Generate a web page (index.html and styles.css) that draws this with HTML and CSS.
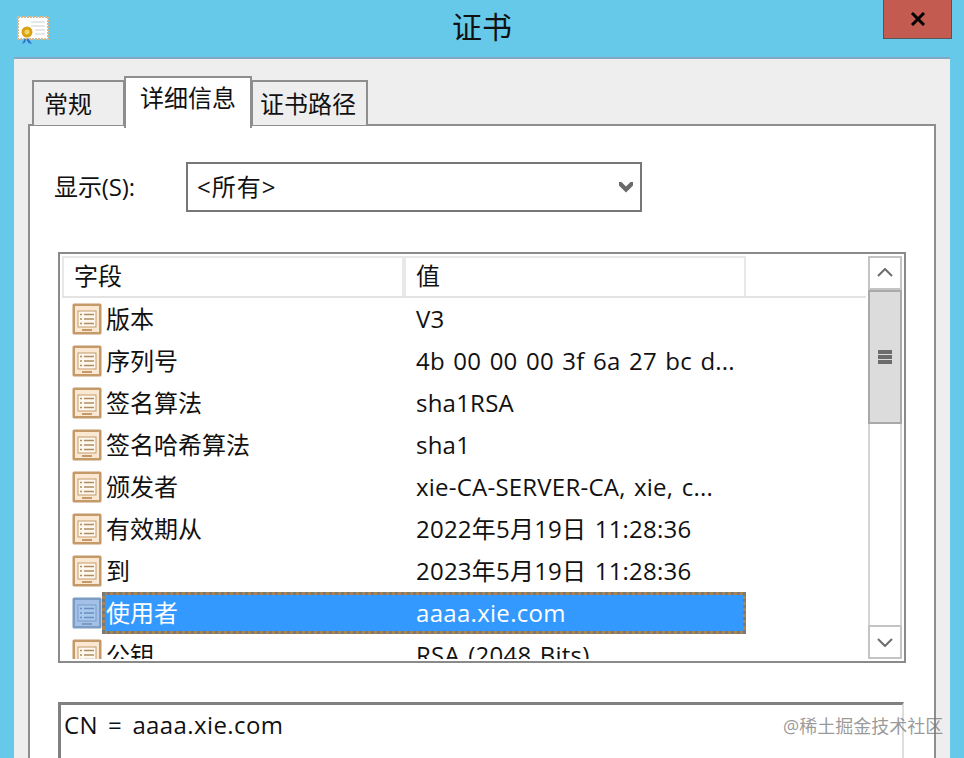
FILE: index.html
```html
<!DOCTYPE html>
<html lang="zh">
<head>
<meta charset="utf-8">
<title>证书</title>
<link rel="stylesheet" href="styles.css">
</head>
<body>
<svg class="defs" width="0" height="0" aria-hidden="true">
  <symbol id="field" viewBox="0 0 30 32">
    <rect x="0.500" y="0.500" width="29" height="31" rx="1.500" class="ic-edge"/>
    <rect x="3" y="3" width="24" height="26" class="ic-fill"/>
    <rect x="6" y="8" width="18" height="16" class="ic-paper"/>
    <path d="M8 11.500h2M12 11.500h10M8 16h2M12 16h10M8 20.500h2M12 20.500h10" class="ic-line"/>
    <path d="M10 27h10" class="ic-foot"/>
  </symbol>
</svg>
<header class="titlebar">
  <svg class="cert" width="32" height="28" viewBox="0 0 32 28">
    <rect x="1" y="1" width="30" height="22" fill="#fff" stroke="#d9b98c" stroke-width="2" stroke-dasharray="2 1"/>
    <path d="M14 6h14M14 10h14M18 14h10M18 18h10" stroke="#cfcfcf" stroke-width="1.200"/>
    <path d="M8 22l-3 6 3-1.500 1-3zM11 22l4 6-3.500-1-2-3z" fill="#2f6fd0"/>
    <circle cx="10" cy="16" r="5.500" fill="#d9a30f"/>
    <circle cx="10" cy="16" r="2.500" fill="#f3d46a"/>
  </svg>
  <h1 class="title">证书</h1>
  <div class="close"><svg width="16" height="14" viewBox="0 0 16 14"><path d="M2 1l12 12M14 1L2 13" stroke="#000" stroke-width="3"/></svg></div>
</header>
<main class="window">
  <nav class="tabs">
    <div class="tab">常规</div>
    <div class="tab tab-on">详细信息</div>
    <div class="tab tab-last">证书路径</div>
  </nav>
  <section class="panel">
    <div class="show-row">
      <span class="show-label">显示(S):</span>
      <div class="select">
        <span class="sel-text">&lt;所有&gt;</span>
        <svg width="14" height="12" viewBox="0 0 14 12"><path d="M0 1h2.500l4.500 4.500 4.500-4.500h2.500v3.500l-7 7-7-7z" fill="#6a6a6a"/></svg>
      </div>
    </div>
    <div class="list">
      <div class="list-main">
        <div class="head"><div class="hcell">字段</div><div class="hcell">值</div></div>
        <div class="rows">
          <div class="row"><svg class="ficon"><use href="#field"/></svg><span class="name">版本</span><span class="val">V3</span></div>
          <div class="row"><svg class="ficon"><use href="#field"/></svg><span class="name">序列号</span><span class="val">4b 00 00 00 3f 6a 27 bc d...</span></div>
          <div class="row"><svg class="ficon"><use href="#field"/></svg><span class="name">签名算法</span><span class="val">sha1RSA</span></div>
          <div class="row"><svg class="ficon"><use href="#field"/></svg><span class="name">签名哈希算法</span><span class="val">sha1</span></div>
          <div class="row"><svg class="ficon"><use href="#field"/></svg><span class="name">颁发者</span><span class="val">xie-CA-SERVER-CA, xie, c...</span></div>
          <div class="row"><svg class="ficon"><use href="#field"/></svg><span class="name">有效期从</span><span class="val">2022年5月19日 11:28:36</span></div>
          <div class="row"><svg class="ficon"><use href="#field"/></svg><span class="name">到</span><span class="val">2023年5月19日 11:28:36</span></div>
          <div class="row row-sel"><svg class="ficon"><use href="#field"/></svg><div class="sel"><span class="name">使用者</span><span class="val">aaaa.xie.com</span></div></div>
          <div class="row"><svg class="ficon"><use href="#field"/></svg><span class="name">公钥</span><span class="val">RSA (2048 Bits)</span></div>
        </div>
      </div>
      <div class="scroll">
        <div class="sbtn"><svg width="16" height="10" viewBox="0 0 16 10"><path d="M1 8l7-7 7 7" fill="none" stroke="#6d6d6d" stroke-width="2"/></svg></div>
        <div class="thumb"><i></i><i></i><i></i></div>
        <div class="track"></div>
        <div class="sbtn"><svg width="16" height="10" viewBox="0 0 16 10"><path d="M1 2l7 7 7-7" fill="none" stroke="#6d6d6d" stroke-width="2"/></svg></div>
      </div>
    </div>
    <div class="detail">CN = aaaa.xie.com</div>
  </section>
</main>
<div class="mark">@稀土掘金技术社区</div>
</body>
</html>
```
FILE: styles.css
```css
html, body { margin: 0; padding: 0; }
body {
  width: 964px; height: 758px; overflow: hidden; position: relative;
  background: #66c9ea; color: #111;
  font-family: "Open Sans", "Noto Sans CJK SC", sans-serif;
  font-size: 24px; line-height: 32px;
  display: flex; flex-direction: column;
}
.defs { position: absolute; }
.titlebar {
  height: 57px; flex: none;
  display: grid; grid-template-columns: 1fr auto 1fr; align-items: start;
}
.cert { margin: 16px 0 0 17px; }
.title { margin: 8px 0 0; font-size: 30px; line-height: 38px; font-weight: 400; }
.close {
  justify-self: end; margin-right: 12px; width: 69px; height: 39px; box-sizing: border-box;
  background: #c45b50; border: 1px solid #555; border-top: 0;
  display: flex; align-items: center; justify-content: center;
}
.window {
  flex: 1; margin: 0 14px; min-height: 0;
  background: #eeeeee; border-top: 2px solid #86a7c4;
  display: flex; flex-direction: column; padding: 17px 14px 0;
}
.tabs { display: flex; align-items: flex-start; padding-left: 4px; height: 48px; flex: none; position: relative; z-index: 1; }
.tab {
  box-sizing: border-box; height: 45px; margin-top: 4px; width: 93px;
  border: 2px solid #8e8e8e; border-bottom: 0; padding: 6px 0 0 10px;
  background: #eeeeee;
}
.tab-on {
  width: 128px; height: 52px; margin-top: 0; margin-left: -1px;
  background: #fff; padding: 4px 0 0 14px;
}
.tab-last { width: 117px; margin-left: -1px; padding-left: 7px; }
.panel {
  flex: 1; min-height: 0; background: #fff; border: 2px solid #8e8e8e; border-bottom: 0;
  padding: 36px 30px 0 28px; overflow: hidden;
  display: flex; flex-direction: column;
}
.show-row { display: flex; align-items: center; height: 50px; flex: none; }
.show-label { width: 132px; margin-left: -4px; flex: none; letter-spacing: -.1px; }
.select {
  box-sizing: border-box; width: 456px; height: 50px; border: 2px solid #777;
  display: flex; align-items: center; justify-content: space-between; padding: 0 7px 0 9px;
}
.sel-text { letter-spacing: 1px; }
.list {
  box-sizing: border-box; width: 848px; height: 411px; margin-top: 40px; flex: none;
  border: 2px solid #8a8a8a; padding: 2px; display: flex; overflow: hidden;
}
.list-main { width: 804px; flex: none; overflow: hidden; }
.head { display: flex; height: 42px; box-sizing: border-box; border-bottom: 2px solid #e3e3e3; width: 806px; }
.hcell {
  box-sizing: border-box; width: 342px; border: 2px solid #e8e8e8; border-bottom: 0; padding: 2px 0 0 10px;
}
.row { display: flex; align-items: center; height: 42px; padding-left: 10px; }
.ficon { width: 30px; height: 32px; flex: none; --edge: #c49a68; --fill: #fbe8d2; --paper: #fff8ef; --line: #b08d64; }
.ic-edge { fill: var(--edge); }
.ic-fill { fill: var(--fill); }
.ic-paper { fill: var(--paper); stroke: var(--edge); }
.ic-line { stroke: var(--line); stroke-width: 1.500; fill: none; }
.ic-foot { stroke: var(--edge); stroke-width: 2; }
.name { width: 314px; flex: none; padding-left: 4px; box-sizing: border-box; white-space: nowrap; }
.val { white-space: nowrap; letter-spacing: .22px; word-spacing: 2px; }
.row-sel .ficon { --edge: #7c9cc4; --fill: #a3c1e8; --paper: #a9c8ee; --line: #6a8fc0; }
.sel {
  display: flex; align-items: center; box-sizing: border-box; width: 644px; height: 42px;
  background: linear-gradient(#3399ff, #3399ff) padding-box, #a98455 border-box;
  border: 3px dotted #77797c; color: #fff;
}
.sel .name { padding-left: 1px; width: 311px; }
.sel .val { letter-spacing: .3px; }
.scroll { width: 34px; flex: none; margin-left: 2px; display: flex; flex-direction: column; }
.sbtn {
  box-sizing: border-box; height: 34px; flex: none; border: 2px solid #c4c4c4; background: #fff;
  display: flex; align-items: center; justify-content: center;
}
.thumb {
  box-sizing: border-box; height: 134px; flex: none; background: #dcdcdc; border: 2px solid #a9a9a9;
  display: flex; flex-direction: column; align-items: center; justify-content: center; gap: 1px;
}
.thumb i { display: block; width: 14px; height: 4px; background: #6c6c6c; }
.track { flex: 1; border: solid #d4d4d4; border-width: 0 2px; }
.detail {
  box-sizing: border-box; width: 846px; height: 80px; margin-top: 39px; flex: none;
  border: solid #808080; border-width: 3px 2px 0 3px; border-right-color: #dedede; padding: 4px 0 0 3px;
  letter-spacing: .4px; word-spacing: 3.500px;
}
.mark {
  position: absolute; left: 783px; top: 714px; font-size: 18px; line-height: 24px;
  color: rgba(120,120,120,.75); white-space: nowrap;
}
```
